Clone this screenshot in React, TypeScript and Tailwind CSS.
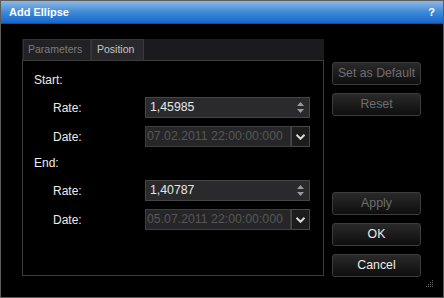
import React from "react";

const font = { fontFamily: '"Liberation Sans", Arial, sans-serif' };

function Spinner() {
  return (
    <div className="flex flex-col items-center justify-center gap-[3px] w-[18px] h-full">
      <svg width="7" height="4" viewBox="0 0 7 4"><path d="M0 4 L3.5 0 L7 4 Z" fill="#9a9a9a" /></svg>
      <svg width="7" height="4" viewBox="0 0 7 4"><path d="M0 0 L3.5 4 L7 0 Z" fill="#9a9a9a" /></svg>
    </div>
  );
}

function RateInput({ value }: { value: string }) {
  return (
    <div className="w-[165px] h-[21px] bg-[#2a2a2c] border border-[#454547] flex items-center justify-between">
      <span className="pl-[4px] text-[12.3px] text-[#e6e6e6] leading-none">{value}</span>
      <Spinner />
    </div>
  );
}

function DateInput({ value }: { value: string }) {
  return (
    <div className="flex h-[21px]">
      <div className="w-[146px] h-full bg-[#262628] border border-[#3e3e40] flex items-center overflow-hidden">
        <span className="pl-[1px] text-[12.3px] text-[#565656] leading-none whitespace-nowrap">{value}</span>
      </div>
      <div className="w-[19px] h-full bg-[#1c1c1c] border border-[#474747] flex items-center justify-center">
        <svg width="9" height="6" viewBox="0 0 9 6">
          <path d="M0.5 0.8 L4.5 4.8 L8.5 0.8" stroke="#d8d8d8" strokeWidth="2" fill="none" />
        </svg>
      </div>
    </div>
  );
}

function Btn({ label, disabled }: { label: string; disabled?: boolean }) {
  return (
    <div
      className={`w-[89px] h-[23px] rounded-[3px] border border-[#3c3c3c] bg-gradient-to-b from-[#2a2a2a] to-[#0e0e0e] flex items-center justify-center text-[12.3px] leading-none ${
        disabled ? "text-[#6e6e6e]" : "text-[#ececec]"
      }`}
    >
      {label}
    </div>
  );
}

export default function App() {
  return (
    <div style={font} className="w-[444px] h-[298px] border border-[#5c5c5c] bg-black flex flex-col relative">
      <div className="h-[23px] bg-gradient-to-b from-[#8cb8e4] via-[#3f8ad8] to-[#1466cc] flex items-center justify-between pl-[8px] pr-[8px] border-b border-[#0d4fa0]">
        <span className="text-white font-bold text-[11px]">Add Ellipse</span>
        <span className="text-white font-bold text-[11px]">?</span>
      </div>
      <div className="flex pl-[21px] pt-[15px]">
        <div className="w-[302px] flex flex-col">
          <div className="h-[21px] bg-[#1b1b1d] flex items-stretch">
            <div className="w-[68px] ml-[1px] bg-[#222224] border border-[#333335] border-b-0 flex items-center pl-[4px] text-[10.5px] text-[#7c7c7c]">
              Parameters
            </div>
            <div className="w-[53px] bg-[#29292b] border border-[#38383a] border-b-0 flex items-center pl-[5px] text-[10.5px] text-[#c6c6c6]">
              Position
            </div>
          </div>
          <div className="h-[216px] border border-[#3c3c3c] flex flex-col pl-[11px] text-[12px] text-[#ececec]">
            <div className="mt-[11px] h-[16px] flex items-center">Start:</div>
            <div className="mt-[9px] flex items-center">
              <span className="ml-[19px] w-[92px]">Rate:</span>
              <RateInput value="1,45985" />
            </div>
            <div className="mt-[8px] flex items-center">
              <span className="ml-[19px] w-[92px]">Date:</span>
              <DateInput value="07.02.2011 22:00:00:000" />
            </div>
            <div className="mt-[8px] h-[16px] flex items-center">End:</div>
            <div className="mt-[9px] flex items-center">
              <span className="ml-[19px] w-[92px]">Rate:</span>
              <RateInput value="1,40787" />
            </div>
            <div className="mt-[8px] flex items-center">
              <span className="ml-[19px] w-[92px]">Date:</span>
              <DateInput value="05.07.2011 22:00:00:000" />
            </div>
          </div>
        </div>
        <div className="ml-[8px] pt-[23px] flex flex-col">
          <Btn label="Set as Default" disabled />
          <div className="mt-[8px]"><Btn label="Reset" disabled /></div>
          <div className="mt-[76px]"><Btn label="Apply" disabled /></div>
          <div className="mt-[8px]"><Btn label="OK" /></div>
          <div className="mt-[8px]"><Btn label="Cancel" /></div>
        </div>
      </div>
      <svg className="absolute right-[10px] bottom-[10px]" width="7" height="7" viewBox="0 0 7 7">
        <g fill="#6a6a6a">
          <rect x="6" y="0" width="1" height="1" />
          <rect x="4" y="2" width="1" height="1" />
          <rect x="6" y="2" width="1" height="1" />
          <rect x="2" y="4" width="1" height="1" />
          <rect x="4" y="4" width="1" height="1" />
          <rect x="6" y="4" width="1" height="1" />
          <rect x="0" y="6" width="1" height="1" />
          <rect x="2" y="6" width="1" height="1" />
          <rect x="4" y="6" width="1" height="1" />
          <rect x="6" y="6" width="1" height="1" />
        </g>
      </svg>
    </div>
  );
}
